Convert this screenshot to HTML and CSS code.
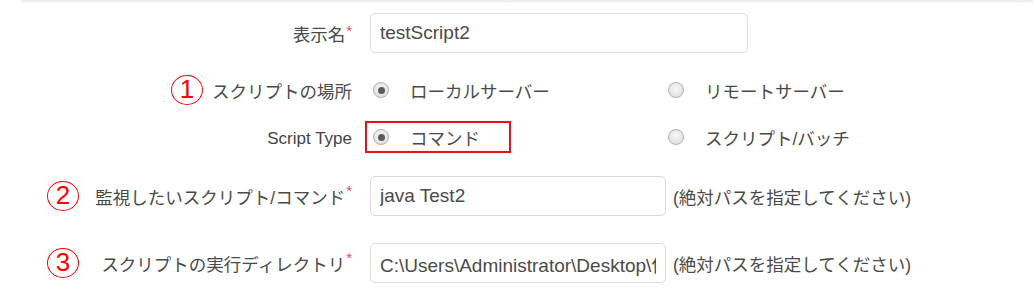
FILE: index.html
```html
<!DOCTYPE html>
<html lang="ja">
<head>
<meta charset="utf-8">
<title>Script Settings</title>
<link rel="stylesheet" href="styles.css">
</head>
<body>
<div class="top-line"></div>
<form class="form">
  <div class="row row-name">
    <label class="label">表示名<span class="req">*</span></label>
    <div class="control">
      <input class="input input-wide" type="text" value="testScript2">
    </div>
  </div>

  <div class="row row-location">
    <div class="label"><span class="mark mark-inline">1</span>スクリプトの場所</div>
    <div class="control options">
      <div class="option"><span class="radio checked"></span><span class="opt-text">ローカルサーバー</span></div>
      <div class="option"><span class="radio"></span><span class="opt-text">リモートサーバー</span></div>
    </div>
  </div>

  <div class="row row-type">
    <div class="label label-latin">Script Type</div>
    <div class="control options">
      <div class="option option-boxed"><span class="radio checked"></span><span class="opt-text">コマンド</span></div>
      <div class="option"><span class="radio"></span><span class="opt-text">スクリプト/バッチ</span></div>
    </div>
  </div>

  <div class="row row-command">
    <div class="label"><span class="mark mark-start">2</span>監視したいスクリプト/コマンド<span class="req">*</span></div>
    <div class="control">
      <input class="input input-narrow" type="text" value="java Test2">
      <span class="hint">(絶対パスを指定してください)</span>
    </div>
  </div>

  <div class="row row-dir">
    <div class="label"><span class="mark mark-start">3</span>スクリプトの実行ディレクトリ<span class="req">*</span></div>
    <div class="control">
      <input class="input input-narrow" type="text" value="C:\Users\Administrator\Desktop\作業フォルダ">
      <span class="hint">(絶対パスを指定してください)</span>
    </div>
  </div>
</form>
</body>
</html>
```

FILE: styles.css
```css
html, body {
  margin: 0;
  padding: 0;
  background: #ffffff;
}

body {
  width: 1033px;
  height: 293px;
  overflow: hidden;
  font-family: "Liberation Sans", "Noto Sans CJK JP", sans-serif;
  color: #4a4a4a;
}

.top-line {
  margin-left: 21px;
  height: 3px;
  background: linear-gradient(#ececec, #f7f7f7);
}

.form {
  display: flex;
  flex-direction: column;
  margin: 0;
}

.row {
  display: grid;
  grid-template-columns: 352px 1fr;
  column-gap: 18px;
  align-items: center;
}

.row-name { margin-top: 10px; height: 40px; }
.row-location { margin-top: 17px; height: 40px; }
.row-type { margin-top: 11px; height: 32px; }
.row-command { margin-top: 23px; height: 40px; }
.row-dir { margin-top: 27px; height: 40px; }

.label {
  display: flex;
  justify-content: flex-end;
  align-items: center;
  font-size: 17.5px;
  color: #4a4a4a;
  white-space: nowrap;
}

.label-latin {
  font-size: 17px;
  color: #444444;
  padding-top: 3px;
}

.req {
  color: #f0436a;
  font-size: 15px;
  align-self: flex-start;
  margin-top: 1px;
  margin-left: 1px;
}

.mark {
  box-sizing: border-box;
  width: 32px;
  height: 30px;
  border: 1.5px solid #ff0000;
  border-radius: 50%;
  color: #ff0000;
  font-family: "Liberation Sans", sans-serif;
  font-size: 26px;
  line-height: 27px;
  text-align: center;
}

.mark-inline { margin-right: 9px; }
.mark-start { margin-left: 47px; margin-right: auto; }

.control {
  display: flex;
  align-items: center;
}

.input {
  box-sizing: border-box;
  height: 40px;
  padding: 0 9px;
  border: 1px solid #dcdcdc;
  border-radius: 5px;
  font-family: "Liberation Sans", "Noto Sans CJK JP", sans-serif;
  font-size: 19px;
  color: #4a4a4a;
  background: #ffffff;
  outline: none;
}

.input-wide { width: 378px; }
.input-narrow { width: 296px; }

.hint {
  margin-left: 7px;
  font-size: 17.5px;
  color: #4a4a4a;
  white-space: nowrap;
}

.options {
  display: grid;
  grid-template-columns: 295px auto;
  align-items: center;
  height: 100%;
}

.option {
  display: flex;
  align-items: center;
  padding-left: 3px;
  font-size: 17.5px;
  color: #4a4a4a;
  white-space: nowrap;
}

.option-boxed {
  box-sizing: border-box;
  margin-left: -5px;
  width: 146px;
  height: 32px;
  padding-left: 6px;
  border: 2px solid #ee1111;
}

.radio {
  box-sizing: border-box;
  width: 16px;
  height: 16px;
  border: 1px solid #b4b4b4;
  border-radius: 50%;
  background: radial-gradient(circle at 50% 40%, #f8f8f8, #d8d8d8);
  box-shadow: 0 0 1px rgba(0, 0, 0, 0.15);
  display: flex;
  align-items: center;
  justify-content: center;
  flex: none;
}

.radio.checked::after {
  content: "";
  width: 7px;
  height: 7px;
  border-radius: 50%;
  background: #5a5a5a;
}

.opt-text {
  margin-left: 21px;
}
```
